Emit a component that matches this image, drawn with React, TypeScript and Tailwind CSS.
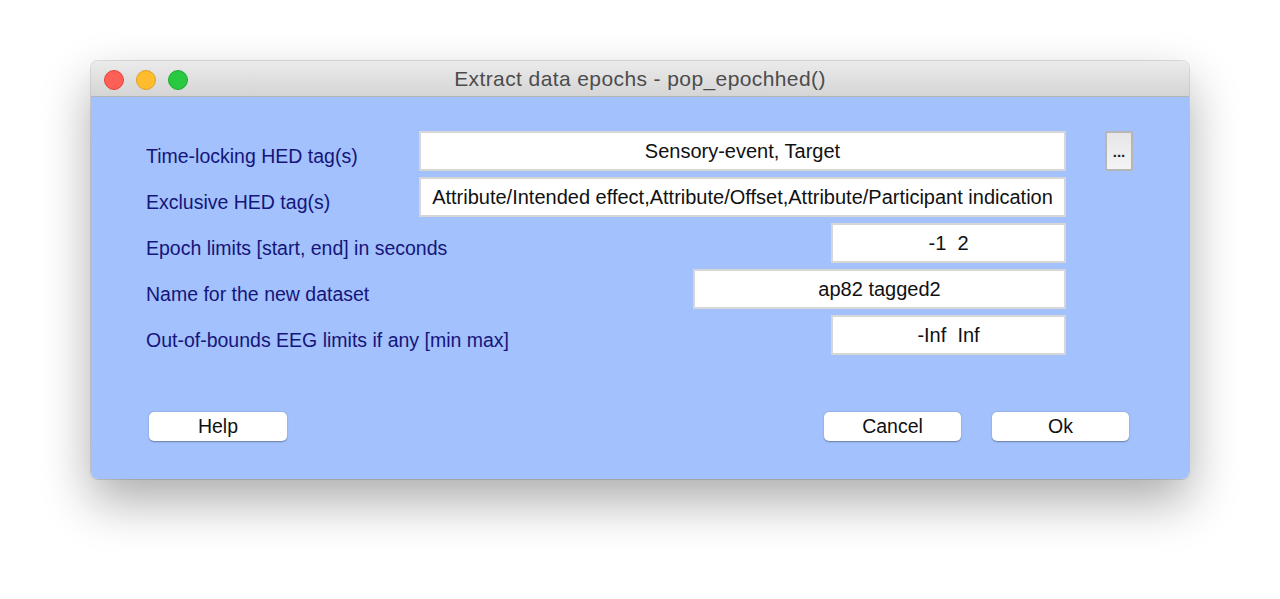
import React from "react";

const font = { fontFamily: '"Liberation Sans", Arial, Helvetica, sans-serif' };

function Field({ value, width }: { value: string; width: string }) {
  return (
    <div
      className={`${width} h-[40px] bg-white border-2 border-[#d6d6d6] flex items-center justify-center text-[20px] text-[#111] whitespace-pre overflow-hidden`}
    >
      {value}
    </div>
  );
}

function Row({
  label,
  value,
  width,
  extra,
}: {
  label: string;
  value: string;
  width: string;
  extra?: React.ReactNode;
}) {
  return (
    <div className="flex h-[40px] items-center">
      <div className="flex-1 pt-[11px] text-[19.5px] text-[#15157a] whitespace-nowrap">{label}</div>
      <Field value={value} width={width} />
      <div className="w-[67px] h-[40px] flex justify-end">{extra}</div>
    </div>
  );
}

function Btn({ label, width }: { label: string; width: string }) {
  return (
    <div
      className={`${width} h-[29px] bg-white rounded-[5px] flex items-center justify-center text-[19.5px] text-[#111] shadow-[0_0.5px_1.5px_rgba(0,0,0,0.35)]`}
    >
      {label}
    </div>
  );
}

export default function App() {
  return (
    <div className="w-[1280px] h-[599px] bg-white pt-[61px] pl-[91px]" style={font}>
      <div className="w-[1098px] h-[418px] rounded-[7px] overflow-hidden flex flex-col shadow-[0_22px_50px_rgba(0,0,0,0.33),0_0_0_1px_rgba(0,0,0,0.12)]">
        <div className="relative h-[36px] shrink-0 bg-gradient-to-b from-[#ebebeb] to-[#d5d5d5] border-b border-[#b4b4b4] flex items-center justify-center">
          <div className="absolute left-[13px] top-[9px] flex gap-[12px]">
            <div className="w-[20px] h-[20px] rounded-full bg-[#fe5f57] border border-[#e1453f]" />
            <div className="w-[20px] h-[20px] rounded-full bg-[#febc2e] border border-[#dfa125]" />
            <div className="w-[20px] h-[20px] rounded-full bg-[#28c840] border border-[#1eab33]" />
          </div>
          <div className="text-[21px] tracking-[0.4px] text-[#4c4c4c] pt-[1px]">Extract data epochs - pop_epochhed()</div>
        </div>
        <div className="flex-1 bg-[#a3c1fd] flex flex-col pt-[34px] pl-[55px] pr-[56px]">
          <div className="flex flex-col gap-[6px]">
            <Row
              label="Time-locking HED tag(s)"
              value="Sensory-event, Target"
              width="w-[647px]"
              extra={
                <div className="w-[28px] h-[40px] bg-gradient-to-b from-[#e6e6e6] to-[#f4f4f4] border-2 border-[#b6b6b6] rounded-[2px] flex items-center justify-center text-[15px] font-bold text-[#222] pt-[3px]">
                  ...
                </div>
              }
            />
            <Row
              label="Exclusive HED tag(s)"
              value="Attribute/Intended effect,Attribute/Offset,Attribute/Participant indication"
              width="w-[647px]"
            />
            <Row label="Epoch limits [start, end] in seconds" value="-1  2" width="w-[235px]" />
            <Row label="Name for the new dataset" value="ap82 tagged2" width="w-[373px]" />
            <Row label="Out-of-bounds EEG limits if any [min max]" value="-Inf  Inf" width="w-[235px]" />
          </div>
          <div className="flex mt-[57px] pl-[3px] pr-[4px]">
            <Btn label="Help" width="w-[138px]" />
            <div className="flex-1" />
            <div className="flex gap-[31px]">
              <Btn label="Cancel" width="w-[137px]" />
              <Btn label="Ok" width="w-[137px]" />
            </div>
          </div>
        </div>
      </div>
    </div>
  );
}
